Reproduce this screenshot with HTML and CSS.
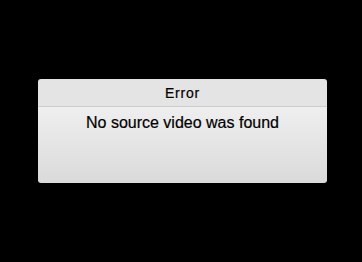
FILE: index.html
```html
<!DOCTYPE html>
<html>
<head>
<meta charset="utf-8">
<link rel="stylesheet" href="styles.css">
</head>
<body>
<div class="screen">
  <div class="dialog">
    <div class="dialog-title">Error</div>
    <div class="dialog-body">No source video was found</div>
  </div>
</div>
</body>
</html>
```
FILE: styles.css
```css
html, body {
  margin: 0;
  padding: 0;
  background: #000;
}
.screen {
  width: 362px;
  height: 262px;
  padding-top: 79px;
  padding-left: 38px;
  box-sizing: border-box;
}
.dialog {
  width: 289px;
  height: 104px;
  border-radius: 3px;
  overflow: hidden;
  font-family: "Liberation Sans", Arial, sans-serif;
  color: #000;
  display: flex;
  flex-direction: column;
}
.dialog-title {
  height: 28px;
  box-sizing: border-box;
  background: #e4e4e4;
  border-bottom: 1px solid #cdcdcd;
  text-align: center;
  font-size: 14px;
  letter-spacing: 0.8px;
  line-height: 28px;
  -webkit-text-stroke: 0.2px #000;
}
.dialog-body {
  flex: 1;
  background: linear-gradient(#efefef, #dadada);
  text-align: center;
  font-size: 16px;
  line-height: 20px;
  padding-top: 6px;
  -webkit-text-stroke: 0.2px #000;
}
```
